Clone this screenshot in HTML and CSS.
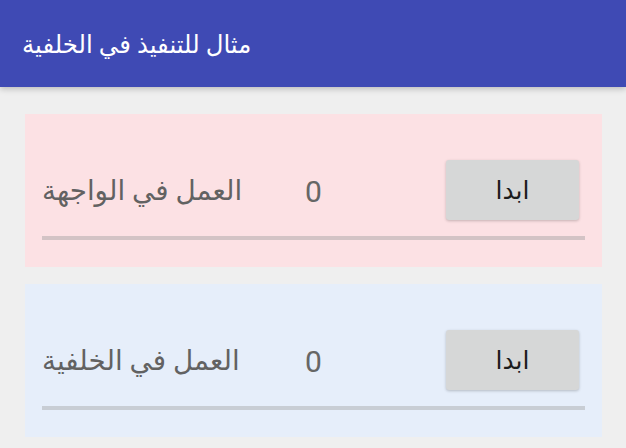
FILE: index.html
```html
<!DOCTYPE html>
<html lang="ar">
<head>
<meta charset="utf-8">
<link rel="stylesheet" href="styles.css">
</head>
<body>
<header class="appbar">
  <h1 class="title">مثال للتنفيذ في الخلفية</h1>
</header>
<main class="content">
  <section class="card card-pink">
    <div class="row">
      <span class="label">العمل في الواجهة</span>
      <span class="count">0</span>
      <button class="btn">ابدا</button>
    </div>
    <div class="progress progress-pink"></div>
  </section>
  <section class="card card-blue">
    <div class="row">
      <span class="label">العمل في الخلفية</span>
      <span class="count">0</span>
      <button class="btn">ابدا</button>
    </div>
    <div class="progress progress-blue"></div>
  </section>
</main>
</body>
</html>
```
FILE: styles.css
```css
html, body {
  margin: 0;
  padding: 0;
}
body {
  width: 626px;
  height: 448px;
  overflow: hidden;
  background: #efefef;
  font-family: "Roboto", "DejaVu Sans", sans-serif;
  direction: ltr;
}
.appbar {
  height: 87px;
  background: #3f4ab4;
  display: flex;
  align-items: center;
  padding-left: 22px;
  box-shadow: 0 2px 6px rgba(0,0,0,0.22);
  position: relative;
  z-index: 1;
}
.title {
  margin: 0;
  color: #ffffff;
  font-weight: normal;
  font-size: 24.4px;
  padding-top: 2px;
}
.content {
  padding: 27px 24px 0 25px;
  display: flex;
  flex-direction: column;
  gap: 17px;
}
.card {
  height: 153px;
  box-sizing: border-box;
  padding: 46px 17px 0 17px;
}
.card-pink { background: #fce1e4; }
.card-blue { background: #e6eefa; }
.row {
  display: flex;
  align-items: center;
  height: 60px;
}
.label {
  color: #626262;
  font-size: 27.8px;
  width: 201px;
  white-space: nowrap;
}
.count {
  color: #666666;
  font-size: 30px;
  margin-left: 62px;
  margin-top: 2px;
}
.btn {
  margin-left: auto;
  margin-right: 6px;
  width: 133px;
  height: 60px;
  border: none;
  border-radius: 3px;
  background: #d6d7d7;
  box-shadow: 0 1px 3px rgba(0,0,0,0.22);
  font-family: "DejaVu Sans", sans-serif;
  font-size: 25px;
  color: #1c1c1c;
  padding: 0;
}
.progress {
  margin-top: 16px;
  height: 4px;
}
.progress-pink { background: #d3c3c5; }
.progress-blue { background: #c8cdd4; }
```
